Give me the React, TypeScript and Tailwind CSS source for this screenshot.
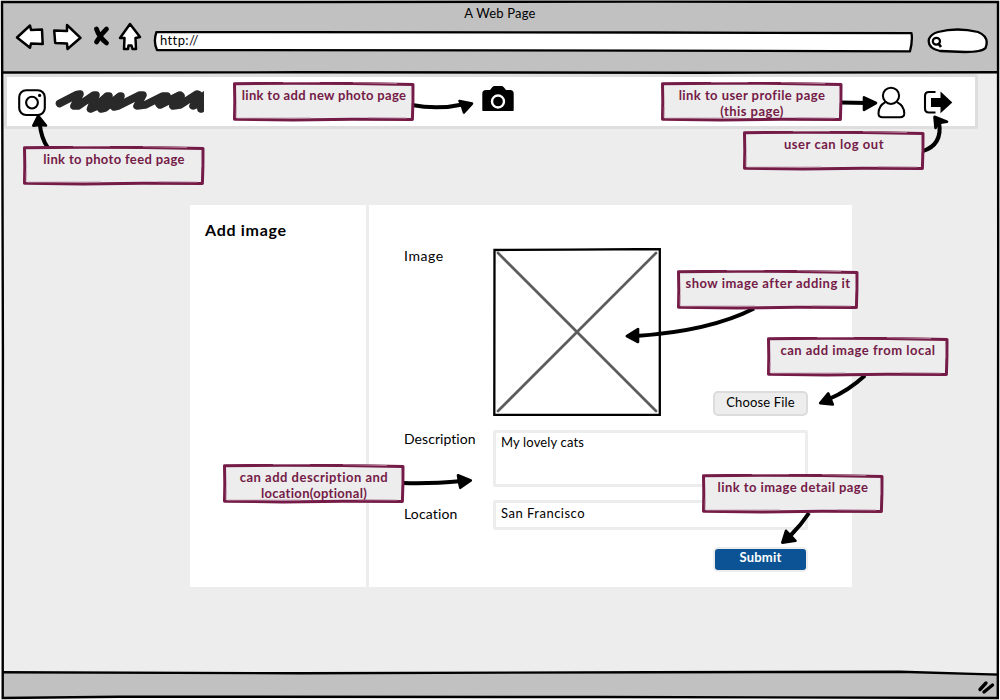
import type { ReactNode } from "react";

type NoteProps = { className: string; textClass: string; children: ReactNode };

function Note({ className, textClass, children }: NoteProps) {
  return (
    <div className={`absolute h-10 w-[182px] ${className}`}>
      <svg className="absolute inset-0" width="182" height="40" viewBox="0 0 182 40">
        <path d="M1.5 1.7 L60 1.2 L120 1.4 L180 2.4 L179.9 20 L179.4 37.4 L120 37.3 L60 37.9 L1.5 37.2 L1.8 20 Z" fill="#ededed" stroke="#741b47" strokeWidth="3" strokeLinejoin="round" />
        <path d="M50 .4 L87 .2 M120 .6 L164 1.6 M4 36.2 L78 36 M135 35.8 L174 36.1 M3.2 25 L3.1 35.6 M178.4 7 L178.6 21" fill="none" stroke="#b98aa1" strokeWidth=".8" />
      </svg>
      <div className={`relative whitespace-nowrap pt-[5px] text-center text-[13px] leading-4 font-bold text-[#741b47] ${textClass}`}>
        {children}
      </div>
    </div>
  );
}

function Arrow({ shaft, head }: { shaft: string; head: string }) {
  return (
    <g>
      <path d={shaft} fill="none" stroke="#000" strokeWidth="4" />
      <path d={head} fill="#000" stroke="#000" strokeWidth="2.6" strokeLinejoin="round" />
    </g>
  );
}

function BrowserBar() {
  return (
    <header className="h-[73px] shrink-0 bg-[#c1c1c1]">
      <div className="flex h-[26px] items-center justify-center pt-[2px] text-[13px] tracking-[0.2px]">A Web Page</div>
      <div className="flex h-[32px] items-center">
        <svg width="152" height="32" viewBox="0 26 152 32" className="shrink-0 overflow-visible" fill="#fff" stroke="#000" strokeWidth="2.5" strokeLinejoin="round">
          <path d="M17 37.5 L30 25.5 L31 30 L42 29.5 L42.7 44 L31 43.5 L30 47.7 Z" />
          <path d="M54.2 30.5 L67 31 L67 25 L80.5 37.8 L67.5 49 L67 43.5 L55.2 43 Z" />
          <path d="M96.5 29 Q99 37 106.5 43 M106.5 29 Q101 34 96.5 42" fill="none" strokeWidth="4.8" strokeLinecap="round" />
          <path d="M130 24 L140 37 L135.5 38 L136 49 L132.5 49 L131.5 45.5 L128.5 45.5 L128 49 L124 49 L124.5 38 L120 38 Z" />
        </svg>
        <div className="relative flex h-[22px] w-[762px] items-center pl-[8px] text-[13px] tracking-[0.4px]">
          <svg className="absolute inset-0" width="762" height="22" viewBox="0 0 762 22">
            <path d="M4.5 1 Q250 .8 500 1.5 L759.5 2.2 Q760.7 10 758 20.3 L500 19.6 Q250 19 5 19 Q1 10 4.5 1Z" fill="#fff" stroke="#000" strokeWidth="2.3" strokeLinejoin="round" />
          </svg>
          <span className="relative -mt-[2px]">http://</span>
        </div>
        <svg className="ml-[12px] shrink-0" width="64" height="30" viewBox="926 27 64 30">
          <path d="M938 32 Q957 27 978 32 Q990 37 985.5 48 Q982 52 965 52 L940 51 Q927 48 929 39 Q931 34 938 32Z" fill="#fff" stroke="#000" strokeWidth="2.3" />
          <ellipse cx="936.4" cy="41.2" rx="3.6" ry="3.4" fill="none" stroke="#000" strokeWidth="2.2" />
          <path d="M938 43 L941 47" stroke="#000" strokeWidth="2.6" />
        </svg>
      </div>
    </header>
  );
}

function NavBar() {
  return (
    <nav className="mt-[1px] ml-[4px] flex h-[55px] w-[974px] shrink-0 items-start rounded-[2px] border-[3px] border-[#dedede] bg-white">
      <svg width="200" height="46" viewBox="7 77 200 46">
        <rect x="19.2" y="90.2" width="25.6" height="24.8" rx="7" fill="none" stroke="#000" strokeWidth="2.1" />
        <circle cx="32" cy="102.6" r="5.9" fill="none" stroke="#000" strokeWidth="2.1" />
        <circle cx="39.6" cy="95.4" r="1.6" />
        <clipPath id="scribble"><rect x="50" y="80" width="154" height="45" /></clipPath>
        <path clipPath="url(#scribble)" d="M59.5 103.5 L77 94.5 L80 94 L74 106 L78 106 L94 95 L96 95 L90.5 109 L95 107 L107 96 L109 96 L101 109 L105 108 L120 96 L121 96 L114 107 L118 106 L140 95 L143 95 L137 106 L145 105 L163 96 L167 96 L159 104 L160 105 L180 95 L181 96 L173 106 L180 105 L197 94 L199 95 L193 106 L198 104 L205 95 L201 109 L212 100" fill="none" stroke="#292929" strokeWidth="7.6" strokeLinecap="round" strokeLinejoin="round" />
      </svg>
      <svg className="ml-[273px]" width="36" height="34" viewBox="480 77 36 34">
        <path d="M486 90 H490 L492 87.4 Q493 86 495 86 H501 Q503 86 504 87.4 L506 90 H510 Q513.7 90 513.7 93.5 V109.5 Q513.7 113 510 113 H486 Q482.3 113 482.3 109.5 V93.5 Q482.3 90 486 90Z" />
        <circle cx="498" cy="101.5" r="6" fill="none" stroke="#fff" strokeWidth="2.4" />
      </svg>
      <svg className="ml-[359px]" width="82" height="46" viewBox="875 77 82 46" fill="none" stroke="#000" strokeWidth="2">
        <path d="M885.3 102.2 Q878.5 106 878.5 113.5 Q878.5 117.2 882.5 117.2 H900 Q904.3 117.2 904.3 113.5 Q904.3 106 897 102.2" />
        <circle cx="891" cy="95.8" r="8.1" />
        <path d="M935.5 92 H929 Q925 92 925 96 V108.5 Q925 112.5 929 112.5 H935.5" strokeWidth="2.1" />
        <path d="M931 98 H940.5 V91.5 L952.3 102.5 L940.5 113.2 V107 H931Z" fill="#000" stroke="none" />
      </svg>
    </nav>
  );
}

function ImagePlaceholder() {
  return (
    <svg width="168" height="168" viewBox="493 248 168 168" fill="none">
      <path d="M498 253 L656 411 M656 253 L498 411" stroke="#5c5c5c" strokeWidth="2.7" strokeLinecap="round" />
      <path d="M494.5 250 L570 249.6 L659.8 249 L659.8 414.8 L494.3 415 Z" stroke="#000" strokeWidth="2.3" />
    </svg>
  );
}

function AddImageCard() {
  return (
    <section className="mt-[76px] ml-[190px] flex h-[382px] w-[662px] shrink-0 gap-[3px]">
      <aside className="w-[176px] bg-white pt-[15px] pl-[15px]">
        <h1 className="text-[16px] leading-5 font-bold tracking-[0.7px]">Add image</h1>
      </aside>
      <form className="flex w-[483px] flex-col bg-white pt-[43px] pl-[35px]" onSubmit={(e) => e.preventDefault()}>
        <div className="flex h-[168px]">
          <label className="w-[89px] text-[14px] leading-4 tracking-[0.6px]">Image</label>
          <ImagePlaceholder />
          <button type="button" className="mt-auto ml-[52px] flex h-[25px] w-[95px] items-center justify-center rounded-[5px] border-2 border-[#dcdcdc] bg-[#ededed] pb-[2px] text-[13px] tracking-[0.15px]">
            Choose File
          </button>
        </div>
        <div className="mt-[14px] flex">
          <label className="w-[89px] pt-[1px] text-[14px] leading-4 tracking-[0.05px]">Description</label>
          <div className="h-[57px] w-[315px] rounded-[2px] border-[3px] border-[#ededed] pt-[1px] pl-[5px] text-[13px] leading-4 tracking-[0.15px]">My lovely cats</div>
        </div>
        <div className="mt-[13px] flex">
          <label className="w-[89px] pt-[6px] text-[14px] leading-4 tracking-[0.15px]">Location</label>
          <div className="h-[30px] w-[315px] rounded-[2px] border-[3px] border-[#ededed] pt-[2px] pl-[5px] text-[13px] leading-4 tracking-[0.5px]">San Francisco</div>
        </div>
        <button type="submit" className="mt-[17px] ml-[309px] flex h-[25px] w-[95px] items-center justify-center rounded-[5px] border-2 border-[#ededed] bg-[#0b5394] pb-[3px] text-[13px] font-bold tracking-[0.25px] text-white">
          Submit
        </button>
      </form>
    </section>
  );
}

export default function App() {
  return (
    <div className="relative flex h-[700px] w-[1000px] flex-col overflow-hidden bg-[#ededed] font-['Lato','Liberation_Sans',sans-serif] text-black [font-variant-ligatures:none]">
      <BrowserBar />
      <NavBar />
      <main className="flex-1">
        <AddImageCard />
      </main>
      <footer className="h-[27px] shrink-0 bg-[#c1c1c1]" />

      <svg className="pointer-events-none absolute inset-0" width="1000" height="700" viewBox="0 0 1000 700">
        <path d="M0 0 H1000 V700 H0Z M2 2 V698 H998 V2Z" fill="#fff" fillRule="evenodd" />
        <g fill="none" stroke="#000" strokeWidth="2.4">
          <path d="M2 2 L300 2 L650 1.6 L998 2 L998.2 250 L997.8 698 L600 697 L120 696.7 L2.7 698 L2.9 350 Z" />
          <path d="M3 72.5 L300 72.3 L700 72.7 L998 72.3 M3 672.2 L300 673.3 L650 672.2 L900 671.8 L998 674.6" />
          <path d="M980 689.5 L986 683 M984 692 L992.5 685" strokeWidth="3.4" strokeLinecap="round" />
        </g>
        <Arrow shaft="M48 148 Q41 138 39.7 123" head="M38.2 115.8 L33.3 125.6 L40 125 L46 125.5 Z" />
        <Arrow shaft="M412 105 Q438 110 464 104.2" head="M459.5 101 L472 103.6 L464 112.5 L462 106 Z" />
        <Arrow shaft="M840 102.6 L868 103" head="M864 97.4 L876 103 L864 109.8 Z" />
        <Arrow shaft="M922 151.4 Q943 145 939 122" head="M934.5 116.8 L947 121.7 L939 123 L935.5 128 Z" />
        <Arrow shaft="M754 308.5 Q710 331 636 336" head="M626.8 336 L638 329 L638 342 Z" />
        <Arrow shaft="M865 375.5 Q848 391 829 399" head="M820.2 403.2 L828.3 393.4 L832.8 404.5 Z" />
        <Arrow shaft="M403 483 Q430 484 462 481" head="M458 475.3 L470.8 480.5 L460.3 487.8 L459 482 Z" />
        <Arrow shaft="M809 513 Q801 525 791 535" head="M782.3 542.6 L786 530.8 L790 535 L795.5 540.8 Z" />
      </svg>

      <Note className="top-[82px] left-[233px]" textClass="tracking-[0.3px]">link to add new photo page</Note>
      <Note className="top-[146px] left-[23px]" textClass="tracking-[0.36px]">link to photo feed page</Note>
      <Note className="top-[82px] left-[661px]" textClass="tracking-[0.45px]">link to user profile page<br />(this page)</Note>
      <Note className="top-[131px] left-[743px]" textClass="tracking-[0.55px]">user can log out</Note>
      <Note className="top-[270px] left-[677px]" textClass="tracking-[0.5px]">show image after adding it</Note>
      <Note className="top-[337px] left-[767px]" textClass="tracking-[0.5px]">can add image from local</Note>
      <Note className="top-[464px] left-[223px]" textClass="tracking-[0.5px]">can add description and<br /><span className="tracking-[0.3px]">location(optional)</span></Note>
      <Note className="top-[474px] left-[702px]" textClass="tracking-[0.43px]">link to image detail page</Note>
    </div>
  );
}
